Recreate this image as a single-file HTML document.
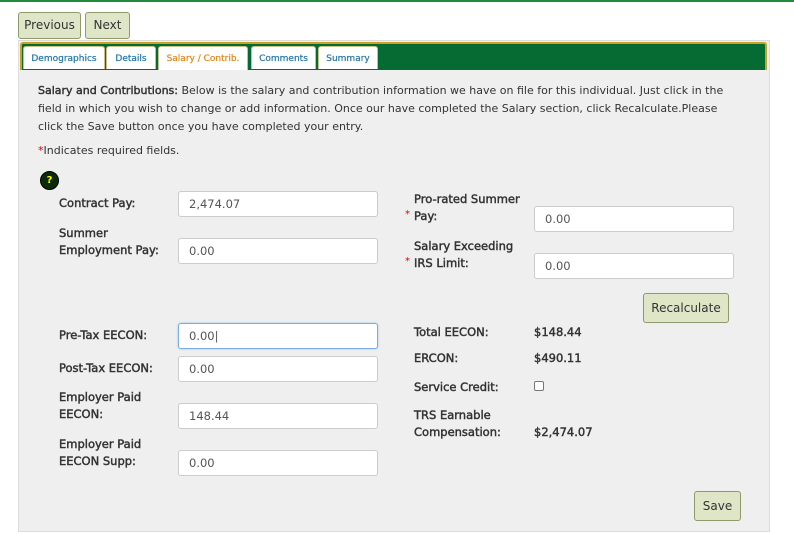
<!DOCTYPE html>
<html><head><meta charset="utf-8"><style>
*{margin:0;padding:0;box-sizing:border-box}
body{width:794px;height:534px;background:#fff;font-family:"DejaVu Sans","Liberation Sans",sans-serif;font-size:11px;color:#333;position:relative;overflow:hidden}
.a{position:absolute}
.btn{position:absolute;background:#dfe6c8;border:1px solid #8f9a6c;border-radius:3px;color:#333;font-size:12px;text-align:center}
.tab{position:absolute;top:46px;height:23px;background:#fff;border:1px solid #c8c28a;border-bottom:none;border-radius:3px 3px 0 0;color:#2a7aa8;font-size:9px;-webkit-text-stroke:0.25px;text-align:center;line-height:24px}
.lbl{position:absolute;color:#333;line-height:17px;font-size:11.5px;-webkit-text-stroke:0.45px}
.in{position:absolute;background:#fff;border:1px solid #ccc;border-radius:3px;height:26px;width:200px;padding-left:10px;line-height:24px;color:#555;font-size:11.5px}
.r{color:#d00}
</style></head><body>
<div class="a" style="left:0;top:0;width:794px;height:2px;background:#1e8a3c"></div>
<div class="btn" style="left:18px;top:12px;width:63px;height:27px;line-height:25px">Previous</div>
<div class="btn" style="left:85px;top:12px;width:45px;height:27px;line-height:25px">Next</div>
<div class="a" style="left:18px;top:40px;width:752px;height:492px;background:#efefef;border:1px solid #ddd"></div>
<div class="a" style="left:20px;top:42px;width:747px;height:28px;background:#056b32;border:2px solid #c9a227;border-bottom:none;border-radius:3px 3px 0 0"></div>
<div class="tab" style="left:23px;width:82px">Demographics</div>
<div class="tab" style="left:106px;width:50px">Details</div>
<div class="tab" style="left:158px;width:90px;color:#e08a1c;height:24px">Salary / Contrib.</div>
<div class="tab" style="left:251px;width:65px">Comments</div>
<div class="tab" style="left:318px;width:60px">Summary</div>
<div class="a" style="left:38px;top:82px;width:706px;line-height:18px"><span style="-webkit-text-stroke:0.45px">Salary and Contributions:</span> Below is the salary and contribution information we have on file for this individual. Just click in the field in which you wish to change or add information. Once our have completed the Salary section, click Recalculate.Please click the Save button once you have completed your entry.</div>
<div class="a" style="left:38px;top:144px"><span class="r">*</span>Indicates required fields.</div>
<div class="a" style="left:40px;top:171px;width:19px;height:19px;border-radius:50%;background:#0a2a0a;border:1px solid #000;color:#ff0;font-size:10px;font-weight:bold;text-align:center;line-height:17px">?</div>
<div class="lbl" style="left:59px;top:195px">Contract Pay:</div>
<div class="in" style="left:178px;top:191px">2,474.07</div>
<div class="lbl" style="left:59px;top:225px">Summer<br>Employment Pay:</div>
<div class="in" style="left:178px;top:238px">0.00</div>
<div class="lbl" style="left:59px;top:327px">Pre-Tax EECON:</div>
<div class="in" style="left:178px;top:323px;border-color:#7aaee0;box-shadow:0 0 2px #9cc4ec">0.00|</div>
<div class="lbl" style="left:59px;top:360px">Post-Tax EECON:</div>
<div class="in" style="left:178px;top:356px">0.00</div>
<div class="lbl" style="left:59px;top:389px">Employer Paid<br>EECON:</div>
<div class="in" style="left:178px;top:403px">148.44</div>
<div class="lbl" style="left:59px;top:436px">Employer Paid<br>EECON Supp:</div>
<div class="in" style="left:178px;top:450px">0.00</div>
<div class="lbl" style="left:414px;top:191px">Pro-rated Summer<br>Pay:</div>
<div class="a r" style="left:405px;top:209px;font-size:10px">*</div>
<div class="in" style="left:534px;top:206px">0.00</div>
<div class="lbl" style="left:414px;top:238px">Salary Exceeding<br>IRS Limit:</div>
<div class="a r" style="left:405px;top:256px;font-size:10px">*</div>
<div class="in" style="left:534px;top:253px">0.00</div>
<div class="btn" style="left:643px;top:293px;width:86px;height:30px;line-height:28px">Recalculate</div>
<div class="lbl" style="left:414px;top:324px">Total EECON:</div>
<div class="lbl" style="left:534px;top:324px">$148.44</div>
<div class="lbl" style="left:414px;top:350px">ERCON:</div>
<div class="lbl" style="left:534px;top:350px">$490.11</div>
<div class="lbl" style="left:414px;top:379px">Service Credit:</div>
<div class="a" style="left:534px;top:381px;width:10px;height:10px;border:1px solid #777;background:#fff;border-radius:2px"></div>
<div class="lbl" style="left:414px;top:407px">TRS Earnable<br>Compensation:</div>
<div class="lbl" style="left:534px;top:424px">$2,474.07</div>
<div class="btn" style="left:694px;top:491px;width:47px;height:30px;line-height:28px">Save</div>
</body></html>
